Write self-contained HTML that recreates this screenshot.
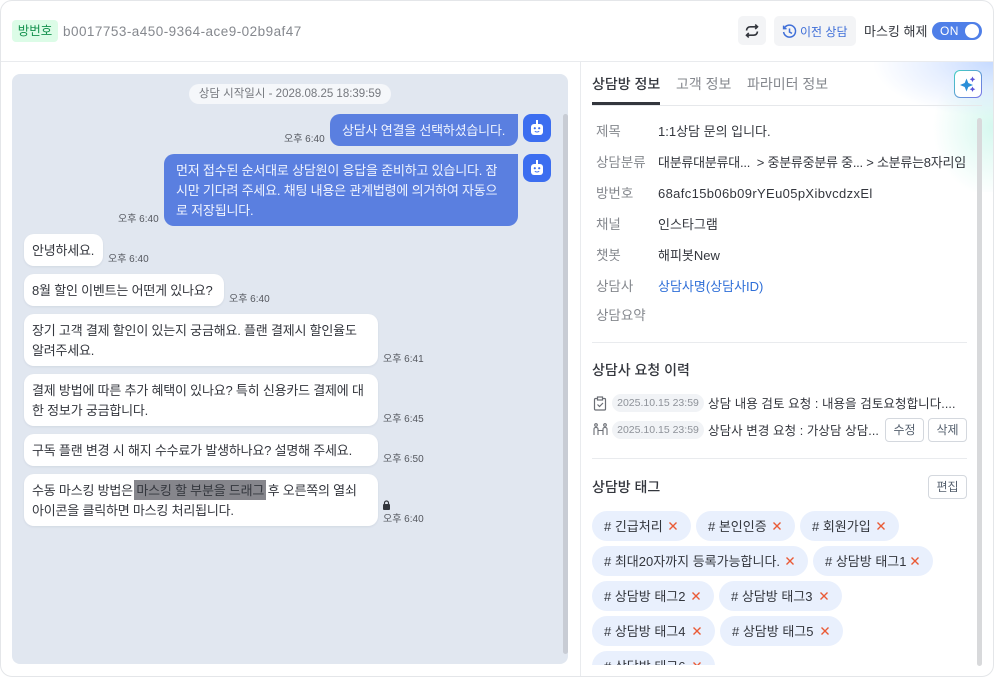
<!DOCTYPE html>
<html lang="ko"><head><meta charset="utf-8"><title>상담</title>
<style>
*{box-sizing:border-box}
html,body{margin:0;padding:0;width:994px;height:677px;overflow:hidden;background:#fff}
body{font-family:"Liberation Sans","Noto Sans CJK KR",sans-serif;color:#33363d;font-size:13px}
.a{position:absolute}
.t{position:absolute;white-space:nowrap;line-height:20px;height:20px}
#frame{position:absolute;left:0;top:0;width:994px;height:677px;border:1px solid #e4e6e9;border-radius:12px;overflow:hidden;background:#fff}
.b{position:absolute;background:#fff;border-radius:10px;box-shadow:0 1px 2px rgba(40,50,80,.08)}
.u{position:absolute;background:#5a7fe0;border-radius:10px 0 10px 10px}
.m{position:absolute;white-space:nowrap;font-size:13px;letter-spacing:-.2px;line-height:20px;color:#33363d;margin-top:1px}
.w{color:#f0f4ff}
.time{position:absolute;font-size:10px;color:#55585f;line-height:12px;white-space:nowrap;margin-top:1px}
.bot{position:absolute;left:523px;width:28px;height:28px;border-radius:8px;background:#3c6ef0}
.lab{position:absolute;left:596px;font-size:13.5px;color:#85888e;line-height:20px;white-space:nowrap;margin-top:1px}
.val{position:absolute;left:658px;font-size:13px;color:#33363d;line-height:20px;white-space:nowrap;margin-top:1px}
.btn{position:absolute;height:24px;border:1px solid #d4d8de;border-radius:4px;background:#fff;font-size:12px;line-height:22px;text-align:center;color:#55606e}
.date{position:absolute;left:612px;width:92px;height:18px;border-radius:9px;background:#f1f3f6;color:#8e9299;font-size:10.5px;line-height:18px;text-align:center;white-space:nowrap}
.tag{position:absolute;height:30px;border-radius:15px;background:#e9f0fd;font-size:13px;line-height:31px;padding-left:12px;color:#33363d;white-space:nowrap}
.tag svg{position:absolute;top:10px;display:block}
.sep{position:absolute;height:1px;background:#e9ebee}
</style></head><body>
<div id="frame"></div>
<div class="a" style="left:12px;top:20px;width:46px;height:22px;background:#dcfce7;border-radius:4px;color:#15924f;font-size:12.500px;line-height:22px;text-align:center">방번호</div>
<div class="t" style="left:63px;top:22px;font-size:13.5px;letter-spacing:.47px;color:#85888e">b0017753-a450-9364-ace9-02b9af47</div>

<div class="a" style="left:738px;top:16px;width:28px;height:29px;background:#f3f4f6;border-radius:5px"></div>
<svg class="a" style="left:745px;top:24px" width="14" height="14" viewBox="0 0 14 14" fill="none" stroke="#33363d" stroke-width="1.600"><path d="M1.500 6.500C1.800 4 3.500 2.800 5.500 2.800H12.500M10.200 .6L12.500 2.800 10.200 5"/><path d="M12.500 7.500C12.200 10 10.500 11.200 8.500 11.200H1.500M3.800 9L1.500 11.200 3.800 13.400"/></svg>
<div class="a" style="left:774px;top:16px;width:82px;height:30px;background:#f3f4f6;border-radius:5px"></div>
<svg class="a" style="left:782px;top:24px" width="15" height="15" viewBox="0 0 15 15" fill="none" stroke="#3f6fd8" stroke-width="1.500"><path d="M2.300 4.200A6 6 0 1 1 1.600 8"/><path d="M1.600 1.600V4.600H4.600M7.500 4.500V8L10 9.400"/></svg>
<div class="t" style="left:800px;top:21px;font-size:12px;color:#3f6fd8;margin-top:1px">이전 상담</div>
<div class="t" style="left:864px;top:22px;font-size:13px;color:#33363d">마스킹 해제</div>
<div class="a" style="left:932px;top:22px;width:50px;height:18px;background:#4f7fe8;border-radius:9px"></div>
<div class="t" style="left:940px;top:21px;font-size:12px;letter-spacing:.4px;color:#fff">ON</div>
<div class="a" style="left:965px;top:24px;width:14px;height:14px;background:#fff;border-radius:50%"></div>

<div class="a" style="left:1px;top:61px;width:992px;height:1px;background:#e9ebee"></div>
<div class="a" style="left:580px;top:62px;width:1px;height:614px;background:#e9ebee"></div>

<div class="a" style="left:12px;top:74px;width:556px;height:590px;background:#e1e7f0;border-radius:8px"></div>
<div class="a" style="left:189px;top:84px;width:202px;height:20px;background:#f5f7fa;border-radius:10px;font-size:11.5px;line-height:21px;text-align:center;color:#75787e;white-space:nowrap">상담 시작일시 - 2028.08.25 18:39:59</div>
<div class="a" style="left:563px;top:114px;width:5px;height:540px;background:#c8ccd4;border-radius:3px"></div>

<div class="u" style="left:330px;top:114px;width:188px;height:32px"></div>
<div class="m w" style="left:342px;top:120px">상담사 연결을 선택하셨습니다.</div>
<div class="time" style="left:284px;top:133px">오후 6:40</div>
<div class="bot" style="top:114px"></div>
<svg class="a" style="left:529px;top:120px" width="16" height="18" viewBox="0 0 16 18"><path fill="#fff" d="M7 0h2v4H7z"/><rect x="2" y="4" width="12" height="11" rx="3" fill="#fff"/><circle cx="5.800" cy="8.200" r="1.100" fill="#3c6ef0"/><circle cx="10.200" cy="8.200" r="1.100" fill="#3c6ef0"/><path d="M5.800 11.200c1.200 1 3.200 1 4.400 0" stroke="#3c6ef0" fill="none"/></svg>

<div class="u" style="left:164px;top:154px;width:354px;height:72px"></div>
<div class="m w" style="left:176px;top:160px">먼저 접수된 순서대로 상담원이 응답을 준비하고 있습니다. 잠<br>시만 기다려 주세요. 채팅 내용은 관계법령에 의거하여 자동으<br>로 저장됩니다.</div>
<div class="time" style="left:118px;top:213px">오후 6:40</div>
<div class="bot" style="top:154px"></div>
<svg class="a" style="left:529px;top:160px" width="16" height="18" viewBox="0 0 16 18"><path fill="#fff" d="M7 0h2v4H7z"/><rect x="2" y="4" width="12" height="11" rx="3" fill="#fff"/><circle cx="5.800" cy="8.200" r="1.100" fill="#3c6ef0"/><circle cx="10.200" cy="8.200" r="1.100" fill="#3c6ef0"/><path d="M5.800 11.200c1.200 1 3.200 1 4.400 0" stroke="#3c6ef0" fill="none"/></svg>

<div class="b" style="left:24px;top:234px;width:79px;height:32px"></div>
<div class="m" style="left:32px;top:240px">안녕하세요.</div>
<div class="time" style="left:108px;top:253px">오후 6:40</div>

<div class="b" style="left:24px;top:274px;width:200px;height:32px"></div>
<div class="m" style="left:32px;top:280px">8월 할인 이벤트는 어떤게 있나요?</div>
<div class="time" style="left:229px;top:293px">오후 6:40</div>

<div class="b" style="left:24px;top:314px;width:354px;height:52px"></div>
<div class="m" style="left:32px;top:320px">장기 고객 결제 할인이 있는지 궁금해요. 플랜 결제시 할인율도<br>알려주세요.</div>
<div class="time" style="left:383px;top:353px">오후 6:41</div>

<div class="b" style="left:24px;top:374px;width:354px;height:52px"></div>
<div class="m" style="left:32px;top:380px">결제 방법에 따른 추가 혜택이 있나요? 특히 신용카드 결제에 대<br>한 정보가 궁금합니다.</div>
<div class="time" style="left:383px;top:413px">오후 6:45</div>

<div class="b" style="left:24px;top:434px;width:354px;height:32px"></div>
<div class="m" style="left:32px;top:440px">구독 플랜 변경 시 해지 수수료가 발생하나요? 설명해 주세요.</div>
<div class="time" style="left:383px;top:453px">오후 6:50</div>

<div class="b" style="left:24px;top:474px;width:354px;height:52px"></div>
<div class="a" style="left:134px;top:480px;width:132px;height:20px;background:#86868c"></div>
<div class="m" style="left:32px;top:480px">수동 마스킹 방법은 마스킹 할 부분을 드래그 후 오른쪽의 열쇠<br>아이콘을 클릭하면 마스킹 처리됩니다.</div>
<svg class="a" style="left:382px;top:500px" width="9" height="10" viewBox="0 0 9 10"><path d="M2.500 4V3a2 2 0 0 1 4 0v1" stroke="#33363d" fill="none" stroke-width="1.200"/><rect x="1" y="4" width="7" height="6" rx="1" fill="#33363d"/></svg>
<div class="time" style="left:383px;top:513px">오후 6:40</div>

<!-- right -->
<div class="a" style="left:781px;top:62px;width:212px;height:130px;background:radial-gradient(ellipse 120px 55px at 100% 0,#c6daff 0,rgba(214,228,255,.6) 50%,rgba(255,255,255,0) 100%),radial-gradient(ellipse 60px 70px at 100% 50%,#d6f8ef 0,rgba(255,255,255,0) 100%)"></div>
<div class="t" style="left:592px;top:74px;font-size:14px;color:#33363d;font-weight:500">상담방 정보</div>
<div class="t" style="left:676px;top:74px;font-size:14px;color:#85888e">고객 정보</div>
<div class="t" style="left:747px;top:74px;font-size:14px;color:#85888e">파라미터 정보</div>
<div class="a" style="left:592px;top:102px;width:68px;height:4px;background:#33363d"></div>
<div class="a" style="left:592px;top:105px;width:390px;height:1px;background:#e6e8eb"></div>
<div class="a" style="left:954px;top:70px;width:28px;height:28px;border-radius:6px;padding:1px;background:linear-gradient(135deg,#3fd0c0,#7a6fe8)"><div style="width:26px;height:26px;border-radius:5px;background:#fff"></div></div>
<svg class="a" style="left:960px;top:76px" width="16" height="16" viewBox="0 0 16 16"><path fill="#2a8fd8" d="M6.500 2.500L8.300 7 13 9 8.300 11 6.500 15.500 4.700 11 0 9 4.700 7z"/><path fill="#5a55d8" d="M12.500 .5l.9 1.900 1.900.9-1.900.9-.9 1.900-.9-1.900-1.900-.9 1.900-.9zM12.500 10.500l.9 1.800 1.900.9-1.900.9-.9 1.800-.9-1.800-1.900-.9 1.900-.9z"/></svg>
<div class="a" style="left:977px;top:118px;width:5px;height:548px;background:#d8d9db;border-radius:3px"></div>

<div class="lab" style="top:121px">제목</div><div class="val" style="top:121px">1:1상담 문의 입니다.</div>
<div class="lab" style="top:152px">상담분류</div><div class="val" style="top:152px;letter-spacing:-.25px">대분류대분류대...&nbsp; &gt; 중분류중분류 중... &gt; 소분류는8자리임</div>
<div class="lab" style="top:183px">방번호</div><div class="val" style="top:183px;letter-spacing:.36px">68afc15b06b09rYEu05pXibvcdzxEl</div>
<div class="lab" style="top:214px">채널</div><div class="val" style="top:214px">인스타그램</div>
<div class="lab" style="top:245px">챗봇</div><div class="val" style="top:245px">해피봇New</div>
<div class="lab" style="top:276px">상담사</div><div class="val" style="top:276px;color:#2f6fd8">상담사명(상담사ID)</div>
<div class="lab" style="top:305px">상담요약</div>
<div class="sep" style="left:592px;top:342px;width:375px"></div>

<div class="t" style="left:592px;top:360px;font-size:14px;font-weight:500">상담사 요청 이력</div>
<svg class="a" style="left:593px;top:396px" width="14" height="15" viewBox="0 0 14 15" fill="none" stroke="#6b6e75" stroke-width="1.200"><rect x="1.500" y="2.500" width="11" height="11.500" rx="1"/><rect x="4.500" y="1" width="5" height="3" fill="#fff"/><path d="M4.500 8.500l2 2 3.500-3.500"/></svg>
<div class="date" style="top:394px">2025.10.15 23:59</div>
<div class="t" style="left:708px;top:394px;font-size:12.500px;letter-spacing:.08px">상담 내용 검토 요청 : 내용을 검토요청합니다....</div>
<svg class="a" style="left:593px;top:422px" width="15" height="15" viewBox="0 0 15 15" fill="none" stroke="#6b6e75" stroke-width="1.100"><circle cx="3" cy="3" r="1.300"/><circle cx="12" cy="3" r="1.300"/><path d="M1 13V7q0-1.500 2-1.500T5 7v6M10 13V7q0-1.500 2-1.500T14 7v6M5.500 8.500h4"/></svg>
<div class="date" style="top:421px">2025.10.15 23:59</div>
<div class="t" style="left:708px;top:421px;font-size:12.500px;letter-spacing:.08px">상담사 변경 요청 : 가상담 상담...</div>
<div class="btn" style="left:885px;top:418px;width:39px">수정</div>
<div class="btn" style="left:928px;top:418px;width:39px">삭제</div>
<div class="sep" style="left:592px;top:458px;width:375px"></div>

<div class="t" style="left:592px;top:477px;font-size:14px;font-weight:500">상담방 태그</div>
<div class="btn" style="left:928px;top:475px;width:39px">편집</div>

<div class="a" style="left:580px;top:511px;width:397px;height:154px;overflow:hidden">
<div class="tag" style="left:12px;top:0;width:99px"># 긴급처리<svg style="left:76px" width="10" height="10" viewBox="0 0 10 10"><path d="M1.500 1.500l7 7M8.500 1.500l-7 7" stroke="#ea5a35" stroke-width="1.400"/></svg></div>
<div class="tag" style="left:116px;top:0;width:99px"># 본인인증<svg style="left:76px" width="10" height="10" viewBox="0 0 10 10"><path d="M1.500 1.500l7 7M8.500 1.500l-7 7" stroke="#ea5a35" stroke-width="1.400"/></svg></div>
<div class="tag" style="left:220px;top:0;width:99px"># 회원가입<svg style="left:76px" width="10" height="10" viewBox="0 0 10 10"><path d="M1.500 1.500l7 7M8.500 1.500l-7 7" stroke="#ea5a35" stroke-width="1.400"/></svg></div>
<div class="tag" style="left:12px;top:35px;width:216px"># 최대20자까지 등록가능합니다.<svg style="left:193px" width="10" height="10" viewBox="0 0 10 10"><path d="M1.500 1.500l7 7M8.500 1.500l-7 7" stroke="#ea5a35" stroke-width="1.400"/></svg></div>
<div class="tag" style="left:233px;top:35px;width:120px"># 상담방 태그1<svg style="left:97px" width="10" height="10" viewBox="0 0 10 10"><path d="M1.500 1.500l7 7M8.500 1.500l-7 7" stroke="#ea5a35" stroke-width="1.400"/></svg></div>
<div class="tag" style="left:12px;top:70px;width:122px"># 상담방 태그2<svg style="left:99px" width="10" height="10" viewBox="0 0 10 10"><path d="M1.500 1.500l7 7M8.500 1.500l-7 7" stroke="#ea5a35" stroke-width="1.400"/></svg></div>
<div class="tag" style="left:139px;top:70px;width:123px"># 상담방 태그3<svg style="left:100px" width="10" height="10" viewBox="0 0 10 10"><path d="M1.500 1.500l7 7M8.500 1.500l-7 7" stroke="#ea5a35" stroke-width="1.400"/></svg></div>
<div class="tag" style="left:12px;top:105px;width:123px"># 상담방 태그4<svg style="left:100px" width="10" height="10" viewBox="0 0 10 10"><path d="M1.500 1.500l7 7M8.500 1.500l-7 7" stroke="#ea5a35" stroke-width="1.400"/></svg></div>
<div class="tag" style="left:140px;top:105px;width:123px"># 상담방 태그5<svg style="left:100px" width="10" height="10" viewBox="0 0 10 10"><path d="M1.500 1.500l7 7M8.500 1.500l-7 7" stroke="#ea5a35" stroke-width="1.400"/></svg></div>
<div class="tag" style="left:12px;top:140px;width:123px"># 상담방 태그6<svg style="left:100px" width="10" height="10" viewBox="0 0 10 10"><path d="M1.500 1.500l7 7M8.500 1.500l-7 7" stroke="#ea5a35" stroke-width="1.400"/></svg></div>
</div>
</body></html>
